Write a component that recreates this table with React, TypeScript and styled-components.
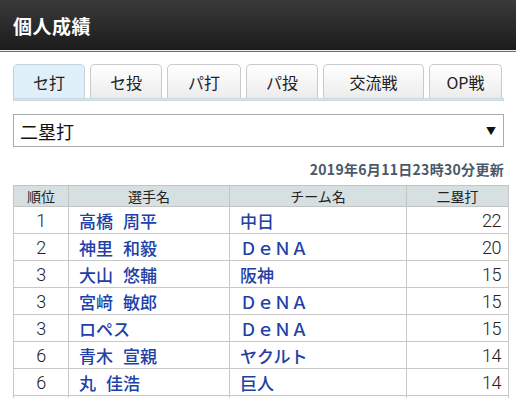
import { createGlobalStyle } from "styled-components";
import styled from "styled-components";

const GlobalStyle = createGlobalStyle`
  body {
    margin: 0;
    background: #ffffff;
    font-family: "Noto Sans CJK JP", "Liberation Sans", sans-serif;
  }
`;

const Header = styled.div`
  height: 50px;
  display: flex;
  align-items: center;
  padding-left: 13px;
  background: linear-gradient(#3a3a3a, #1c1c1c);
  border-bottom: 1px solid #f2f2f2;
  box-shadow: 0 1px 0 #6a6a6a;
`;

const Title = styled.h1`
  margin: 0;
  color: #ffffff;
  font-size: 19px;
  font-weight: bold;
  letter-spacing: 0.5px;
`;

const Content = styled.div`
  padding: 13px 12px 0 13px;
`;

const TabRow = styled.div`
  display: flex;
  gap: 5px;
  height: 34px;
`;

const Tab = styled.div<{ $active?: boolean; $w: number }>`
  width: ${(p) => p.$w}px;
  box-sizing: border-box;
  display: flex;
  align-items: center;
  justify-content: center;
  font-size: 16px;
  color: #222;
  border: 1px solid ${(p) => (p.$active ? "#c3d3db" : "#cacaca")};
  border-bottom: none;
  border-radius: 5px 5px 0 0;
  background: ${(p) =>
    p.$active ? "#dff0f8" : "linear-gradient(#ffffff, #ececec)"};
`;

const TabLine = styled.div`
  height: 1px;
  background: #dbe8ef;
  border: 1px solid #c8d7df;
`;

const Select = styled.div`
  margin-top: 13px;
  height: 33px;
  box-sizing: border-box;
  border: 1px solid #aaaaaa;
  display: flex;
  align-items: center;
  justify-content: space-between;
  padding: 0 7px 0 6px;
  font-size: 18px;
  color: #111;
`;

const Arrow = styled.span`
  font-size: 10px;
  color: #111;
`;

const Updated = styled.div`
  margin-top: 13px;
  text-align: right;
  font-size: 14px;
  font-weight: bold;
  color: #4b5868;
  letter-spacing: 0.3px;
  line-height: 18px;
`;

const Table = styled.table`
  margin-top: 7px;
  width: 491px;
  border-collapse: collapse;
  table-layout: fixed;
`;

const Th = styled.th<{ $w: number }>`
  width: ${(p) => p.$w}px;
  height: 19px;
  padding: 0;
  background: #d6e0e1;
  border: 1px solid #c4c4c4;
  font-size: 14px;
  font-weight: normal;
  color: #222;
`;

const Td = styled.td<{ $align: "center" | "left" | "right"; $link?: boolean }>`
  height: 26px;
  padding: ${(p) =>
    p.$align === "right" ? "0 7px 0 0" : p.$align === "left" ? "0 0 0 10px" : "0"};
  border: 1px solid #c8c8c8;
  text-align: ${(p) => p.$align};
  font-family: ${(p) =>
    p.$link ? '"Noto Sans CJK JP", sans-serif' : 'Roboto, "Liberation Sans", sans-serif'};
  font-size: ${(p) => (p.$link ? "17px" : "18px")};
  font-weight: ${(p) => (p.$link ? 500 : 300)};
  letter-spacing: ${(p) => (p.$link ? "0" : "-0.5px")};
  color: ${(p) => (p.$link ? "#2040a8" : "#222")};
  white-space: nowrap;
`;

const NameGap = styled.span`
  display: inline-block;
  width: 10px;
`;

const tabs = [
  { label: "セ打", w: 72, active: true },
  { label: "セ投", w: 72 },
  { label: "パ打", w: 74 },
  { label: "パ投", w: 72 },
  { label: "交流戦", w: 101 },
  { label: "OP戦", w: 73 },
];

const rows = [
  { rank: 1, name: ["高橋", "周平"], team: "中日", n: 22 },
  { rank: 2, name: ["神里", "和毅"], team: "ＤｅＮＡ", n: 20 },
  { rank: 3, name: ["大山", "悠輔"], team: "阪神", n: 15 },
  { rank: 3, name: ["宮﨑", "敏郎"], team: "ＤｅＮＡ", n: 15 },
  { rank: 3, name: ["ロペス"], team: "ＤｅＮＡ", n: 15 },
  { rank: 6, name: ["青木", "宣親"], team: "ヤクルト", n: 14 },
  { rank: 6, name: ["丸", "佳浩"], team: "巨人", n: 14 },
];

export default function App() {
  return (
    <>
      <GlobalStyle />
      <Header>
        <Title>個人成績</Title>
      </Header>
      <Content>
        <TabRow>
          {tabs.map((t) => (
            <Tab key={t.label} $w={t.w} $active={t.active}>
              {t.label}
            </Tab>
          ))}
        </TabRow>
        <TabLine />
        <Select>
          <span>二塁打</span>
          <Arrow>▼</Arrow>
        </Select>
        <Updated>2019年6月11日23時30分更新</Updated>
        <Table>
          <thead>
            <tr>
              <Th $w={54}>順位</Th>
              <Th $w={160}>選手名</Th>
              <Th $w={176}>チーム名</Th>
              <Th $w={101}>二塁打</Th>
            </tr>
          </thead>
          <tbody>
            {rows.map((r, i) => (
              <tr key={i}>
                <Td $align="center">{r.rank}</Td>
                <Td $align="left" $link>
                  {r.name[0]}
                  {r.name[1] && (
                    <>
                      <NameGap />
                      {r.name[1]}
                    </>
                  )}
                </Td>
                <Td $align="left" $link>
                  {r.team}
                </Td>
                <Td $align="right">{r.n}</Td>
              </tr>
            ))}
            <tr>
              <Td $align="center" />
              <Td $align="left" $link />
              <Td $align="left" $link />
              <Td $align="right" />
            </tr>
          </tbody>
        </Table>
      </Content>
    </>
  );
}
